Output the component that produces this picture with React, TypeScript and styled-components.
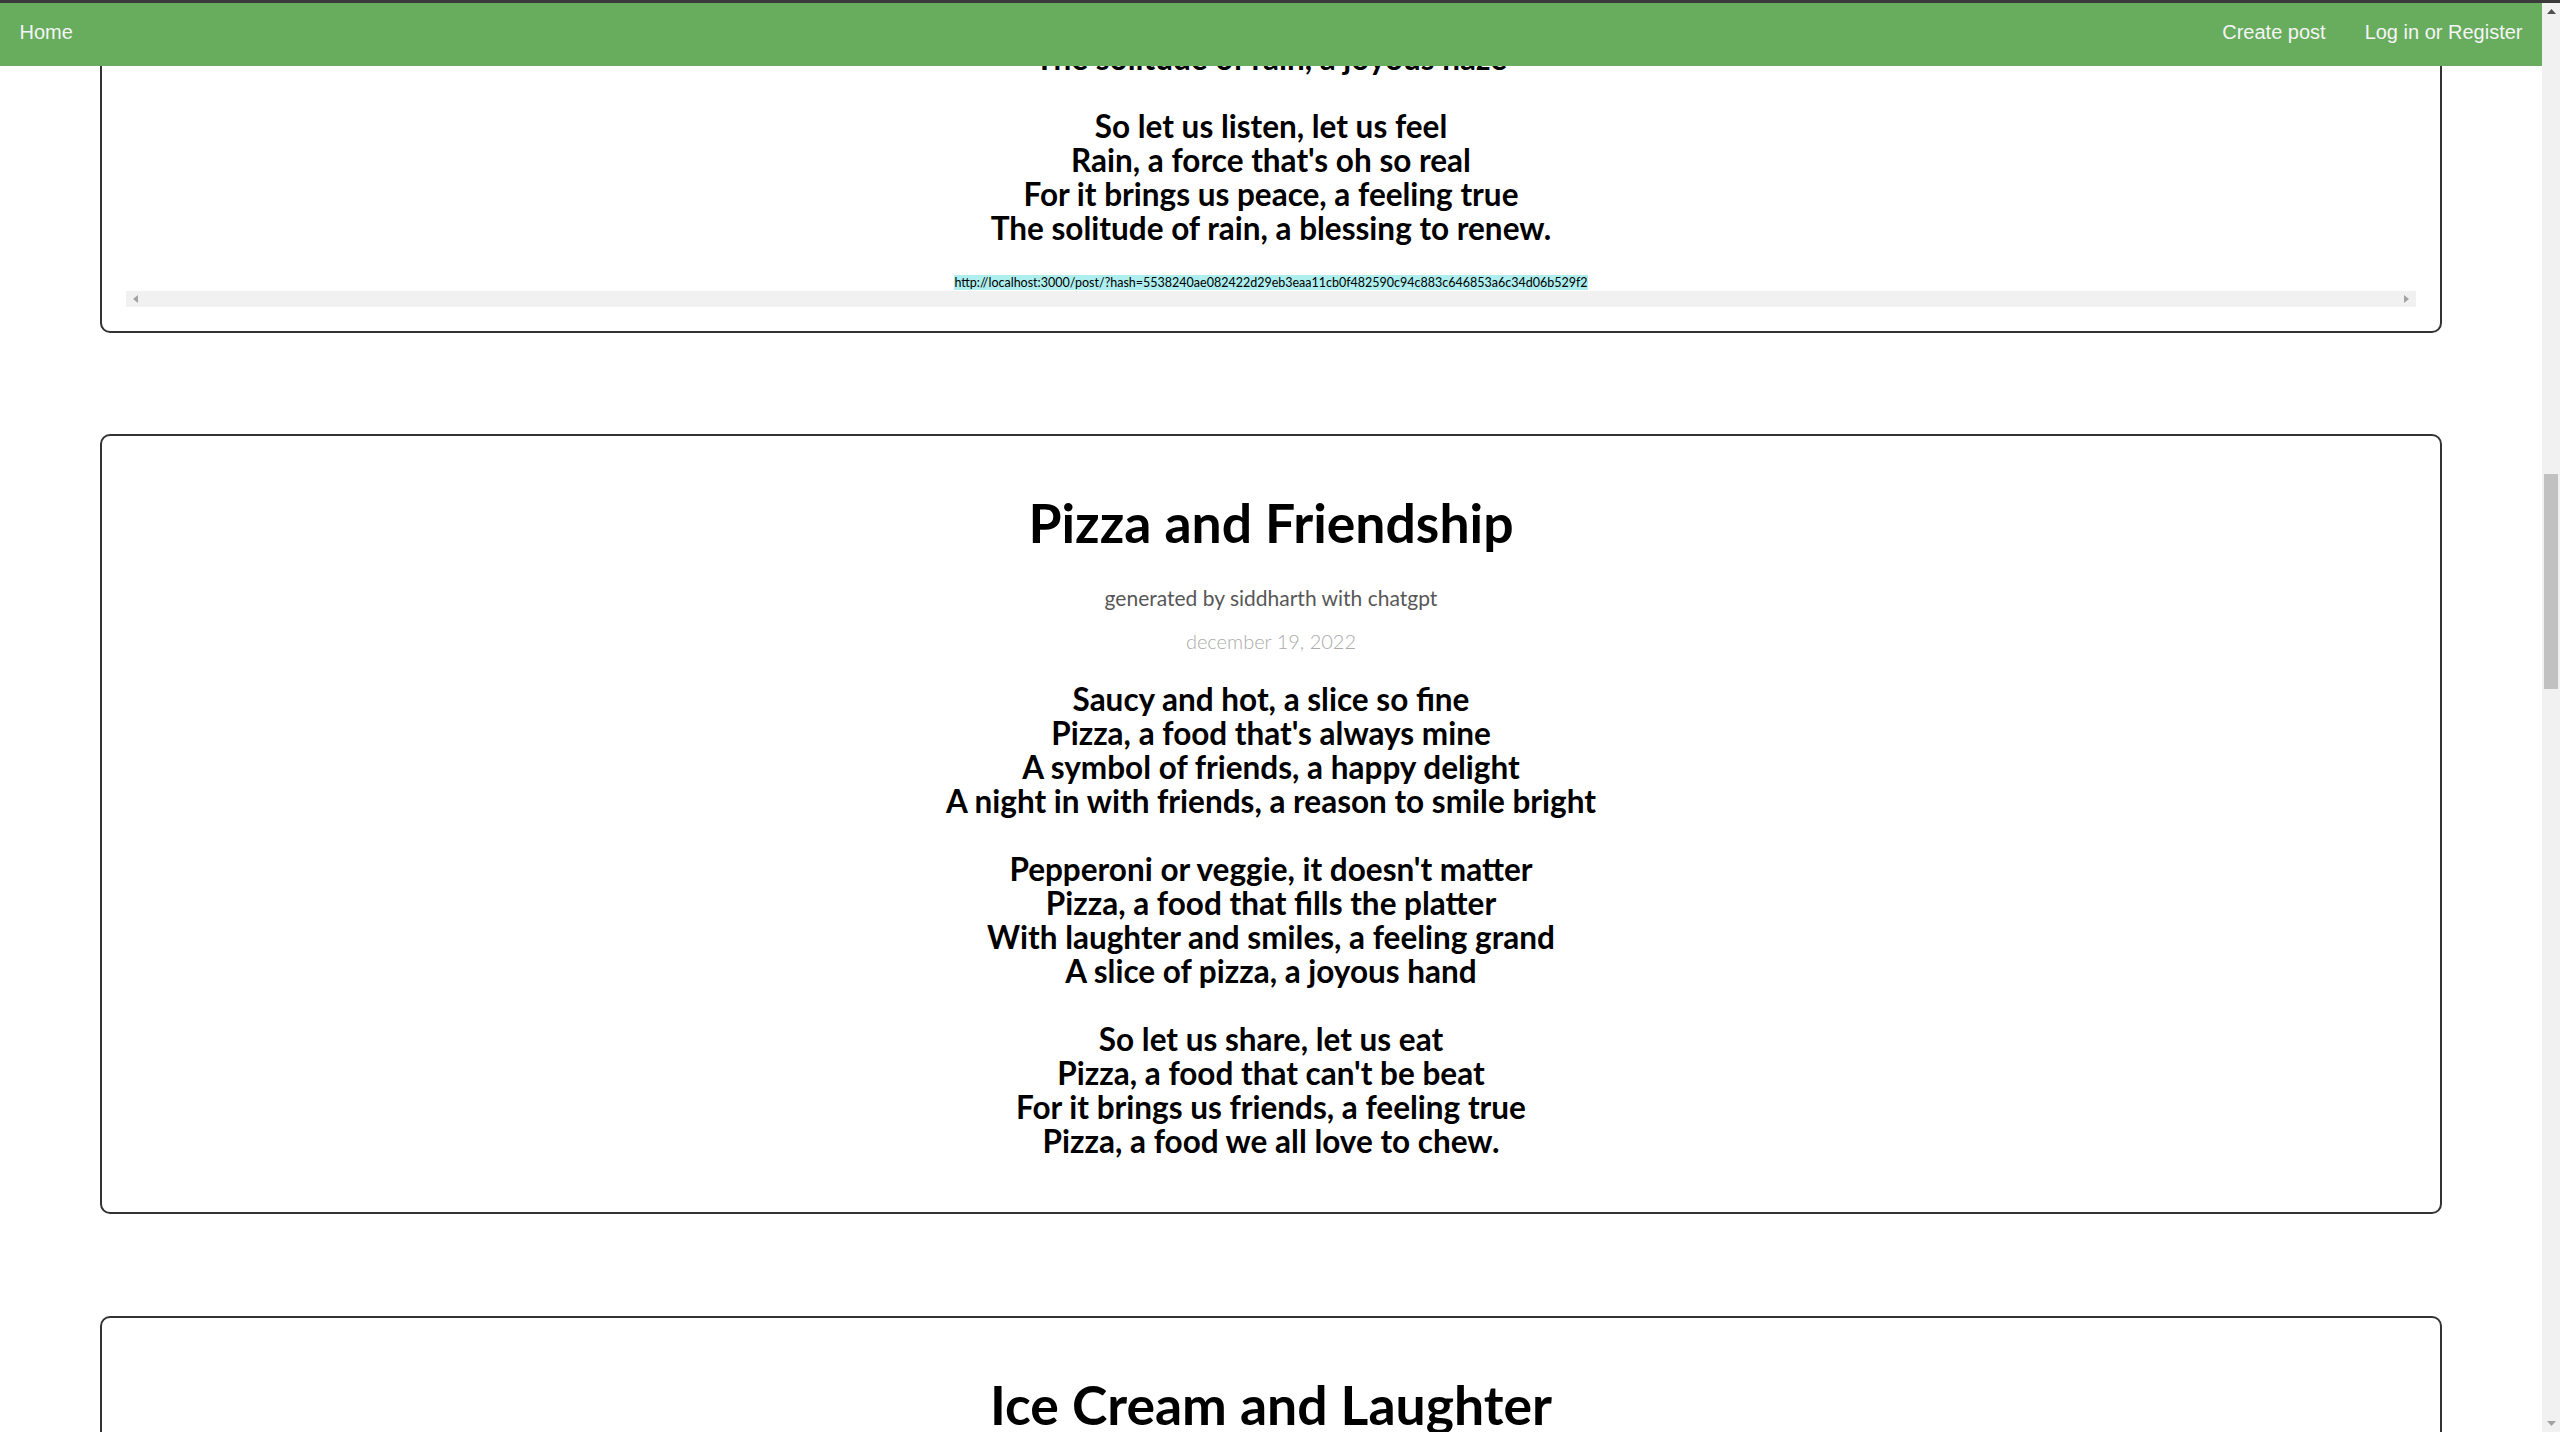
import React, { useLayoutEffect, useRef } from "react";
import styled, { createGlobalStyle } from "styled-components";

const GlobalStyle = createGlobalStyle`
  html, body {
    margin: 0;
    padding: 0;
    height: 100%;
    overflow: hidden;
    background: #ffffff;
  }
  #root {
    height: 100%;
  }
`;

const Frame = styled.div`
  height: 100vh;
  display: flex;
  flex-direction: column;
`;

const TopEdge = styled.div`
  height: 3px;
  flex-shrink: 0;
  background: #3a3a3a;
`;

const Body = styled.div`
  flex: 1;
  min-height: 0;
  display: flex;
`;

const Main = styled.div`
  flex: 1;
  min-width: 0;
  display: flex;
  flex-direction: column;
`;

const Nav = styled.nav`
  height: 63px;
  flex-shrink: 0;
  box-sizing: border-box;
  padding-bottom: 5px;
  display: flex;
  align-items: center;
  background: #68ac5e;
  font-family: "Liberation Sans", Arial, sans-serif;
  font-size: 20px;
  color: #f5f5f5;
`;

const NavLink = styled.a`
  padding: 0 19.5px;
  color: inherit;
  text-decoration: none;
  white-space: nowrap;
`;

const NavRight = styled.div`
  margin-left: auto;
  display: flex;
`;

const Scroller = styled.div`
  flex: 1;
  min-height: 0;
  overflow-y: auto;
  scrollbar-width: none;
  &::-webkit-scrollbar {
    display: none;
  }
`;

const Feed = styled.main`
  display: block;
  font-family: Lato, "Open Sans", sans-serif;
  color: #000;
  padding: 1px 0;
`;

const Card = styled.article`
  margin: 4% 100px;
  border: 2px solid #333;
  border-radius: 10px;
  padding: 26px 24px 24px;
  text-align: center;
`;

const Title = styled.h1`
  margin: 30px 0 0;
  font-size: 53.5px;
  line-height: 60px;
  font-weight: 700;
  color: #000;
`;

const Byline = styled.p`
  margin: 34px 0 0;
  font-size: 21px;
  line-height: 24px;
  font-weight: 400;
  color: #575757;
`;

const DateLine = styled.p`
  margin: 19px 0 0;
  font-size: 20px;
  line-height: 24px;
  font-weight: 300;
  color: #ababab;
`;

const Poem = styled.div`
  margin: 29px 0 30px;
  font-size: 31.5px;
  line-height: 34px;
  font-weight: 700;
  white-space: pre-line;
`;

const ShareBox = styled.div`
  display: flex;
  flex-direction: column;
`;

const LinkLine = styled.div`
  height: 16px;
  line-height: 16px;
  font-size: 12.5px;
  white-space: nowrap;
`;

const ShareLink = styled.a`
  background: paleturquoise;
  color: #000;
  text-decoration: none;
`;

const HScrollbar = styled.div`
  height: 16px;
  background: #f1f1f1;
  display: flex;
  align-items: center;
  justify-content: space-between;
  padding: 0 7px;
`;

const PageScrollbar = styled.div`
  width: 18px;
  flex-shrink: 0;
  background: #f1f1f1;
  display: flex;
  flex-direction: column;
  align-items: center;
`;

const ArrowCell = styled.div`
  height: 17px;
  width: 100%;
  display: flex;
  align-items: center;
  justify-content: center;
`;

const Thumb = styled.div<{ $top: number; $height: number }>`
  margin-top: ${(p) => p.$top}px;
  height: ${(p) => p.$height}px;
  width: 14px;
  background: #c1c1c1;
`;

const Fill = styled.div`
  flex: 1;
`;

type Post = {
  title: string;
  author: string;
  date: string;
  poem: string;
  link?: string;
};

const posts: Post[] = [
  {
    title: "The Solitude of Rain",
    author: "siddharth",
    date: "december 19, 2022",
    poem: `Drops of water, falling down
A gentle rhythm, a soothing sound
The world outside, a misty gray
A quiet moment, a peaceful day

The pitter-patter on the pane
A melody that soothes the brain
A time to dream, to lose the days
The solitude of rain, a joyous haze

So let us listen, let us feel
Rain, a force that's oh so real
For it brings us peace, a feeling true
The solitude of rain, a blessing to renew.`,
    link: "http://localhost:3000/post/?hash=5538240ae082422d29eb3eaa11cb0f482590c94c883c646853a6c34d06b529f2",
  },
  {
    title: "Pizza and Friendship",
    author: "siddharth",
    date: "december 19, 2022",
    poem: `Saucy and hot, a slice so fine
Pizza, a food that's always mine
A symbol of friends, a happy delight
A night in with friends, a reason to smile bright

Pepperoni or veggie, it doesn't matter
Pizza, a food that fills the platter
With laughter and smiles, a feeling grand
A slice of pizza, a joyous hand

So let us share, let us eat
Pizza, a food that can't be beat
For it brings us friends, a feeling true
Pizza, a food we all love to chew.`,
  },
  {
    title: "Ice Cream and Laughter",
    author: "siddharth",
    date: "december 19, 2022",
    poem: `Sweet and cold, a treat so grand
Ice cream, a joy in every hand
A scoop of fun, a melting smile
A sunny day, we stay a while

Chocolate or vanilla, pick your treat
Ice cream, a snack that can't be beat
With giggles shared and cones held high
A summer laugh beneath the sky

So let us laugh, let us play
Ice cream, to brighten up the day
For it brings us joy, a feeling new
Ice cream and laughter, me and you.`,
  },
];

const ArrowLeft = () => (
  <svg width="5" height="8" viewBox="0 0 5 8">
    <polygon points="5,0 5,8 0,4" fill="#a3a3a3" />
  </svg>
);

const ArrowRight = () => (
  <svg width="5" height="8" viewBox="0 0 5 8">
    <polygon points="0,0 0,8 5,4" fill="#a3a3a3" />
  </svg>
);

const ArrowUp = () => (
  <svg width="9" height="5" viewBox="0 0 9 5">
    <polygon points="0,5 9,5 4.5,0" fill="#505050" />
  </svg>
);

const ArrowDown = () => (
  <svg width="9" height="5" viewBox="0 0 9 5">
    <polygon points="0,0 9,0 4.5,5" fill="#a3a3a3" />
  </svg>
);

const PostCard = React.forwardRef<HTMLElement, { post: Post }>(({ post }, ref) => (
  <Card ref={ref}>
    <Title>{post.title}</Title>
    <Byline>generated by {post.author} with chatgpt</Byline>
    <DateLine>{post.date}</DateLine>
    <Poem>{post.poem}</Poem>
    {post.link && (
      <ShareBox>
        <LinkLine>
          <ShareLink href={post.link}>{post.link}</ShareLink>
        </LinkLine>
        <HScrollbar>
          <ArrowLeft />
          <ArrowRight />
        </HScrollbar>
      </ShareBox>
    )}
  </Card>
));

export default function App() {
  const scrollerRef = useRef<HTMLDivElement>(null);
  const anchorRef = useRef<HTMLElement>(null);

  useLayoutEffect(() => {
    const align = () => {
      const s = scrollerRef.current;
      const a = anchorRef.current;
      if (s && a) {
        s.scrollTop += a.getBoundingClientRect().top - 434;
      }
    };
    align();
    if (document.fonts && document.fonts.ready) {
      document.fonts.ready.then(align);
    }
  }, []);

  return (
    <>
      <GlobalStyle />
      <Frame>
        <TopEdge />
        <Body>
          <Main>
            <Nav>
              <NavLink href="#">Home</NavLink>
              <NavRight>
                <NavLink href="#">Create post</NavLink>
                <NavLink href="#">Log in or Register</NavLink>
              </NavRight>
            </Nav>
            <Scroller ref={scrollerRef}>
              <Feed>
                {posts.map((p, i) => (
                  <PostCard key={p.title} post={p} ref={i === 1 ? anchorRef : undefined} />
                ))}
              </Feed>
            </Scroller>
          </Main>
          <PageScrollbar>
            <ArrowCell>
              <ArrowUp />
            </ArrowCell>
            <Thumb $top={454} $height={215} />
            <Fill />
            <ArrowCell>
              <ArrowDown />
            </ArrowCell>
          </PageScrollbar>
        </Body>
      </Frame>
    </>
  );
}
